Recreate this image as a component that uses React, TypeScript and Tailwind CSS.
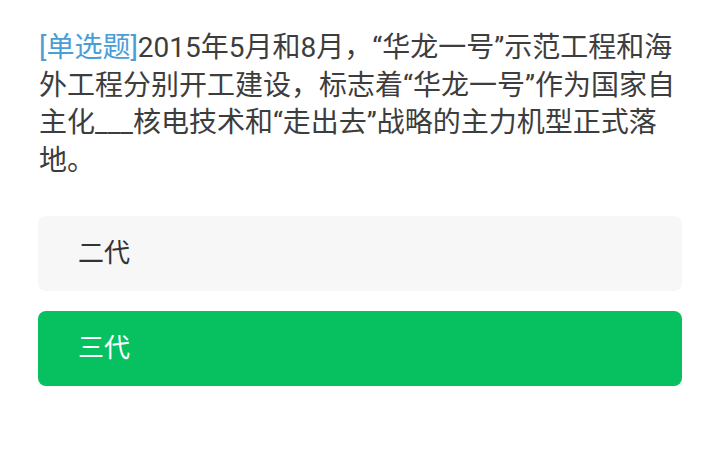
import React from 'react';

const options = [
  { key: 'A', label: '二代', selected: false },
  { key: 'B', label: '三代', selected: true },
];

export default function App() {
  return (
    <div
      className="w-[720px] h-[472px] bg-white overflow-hidden"
      style={{ fontFamily: 'Roboto, "Noto Sans CJK SC", sans-serif' }}
    >
      <p className="pt-[29px] pl-[39px] pr-[32px] text-[28px] leading-[37.5px] text-[#3d3d3d]">
        <span className="text-[#4a9ed6]">[单选题]</span>
        2015年5月和8月，“华龙一号”示范工程和海外工程分别开工建设，标志着“华龙一号”作为国家自主化___核电技术和“走出去”战略的主力机型正式落地。
      </p>

      <div className="mt-[37px] px-[38px] flex flex-col gap-[20px]">
        {options.map((opt) => (
          <div
            key={opt.key}
            className={
              opt.selected
                ? 'h-[75px] rounded-lg bg-[#07c160] text-white flex items-center pl-[40px] text-[26px]'
                : 'h-[75px] rounded-lg bg-[#f7f7f7] text-[#333333] flex items-center pl-[40px] text-[26px]'
            }
          >
            {opt.label}
          </div>
        ))}
      </div>
    </div>
  );
}
